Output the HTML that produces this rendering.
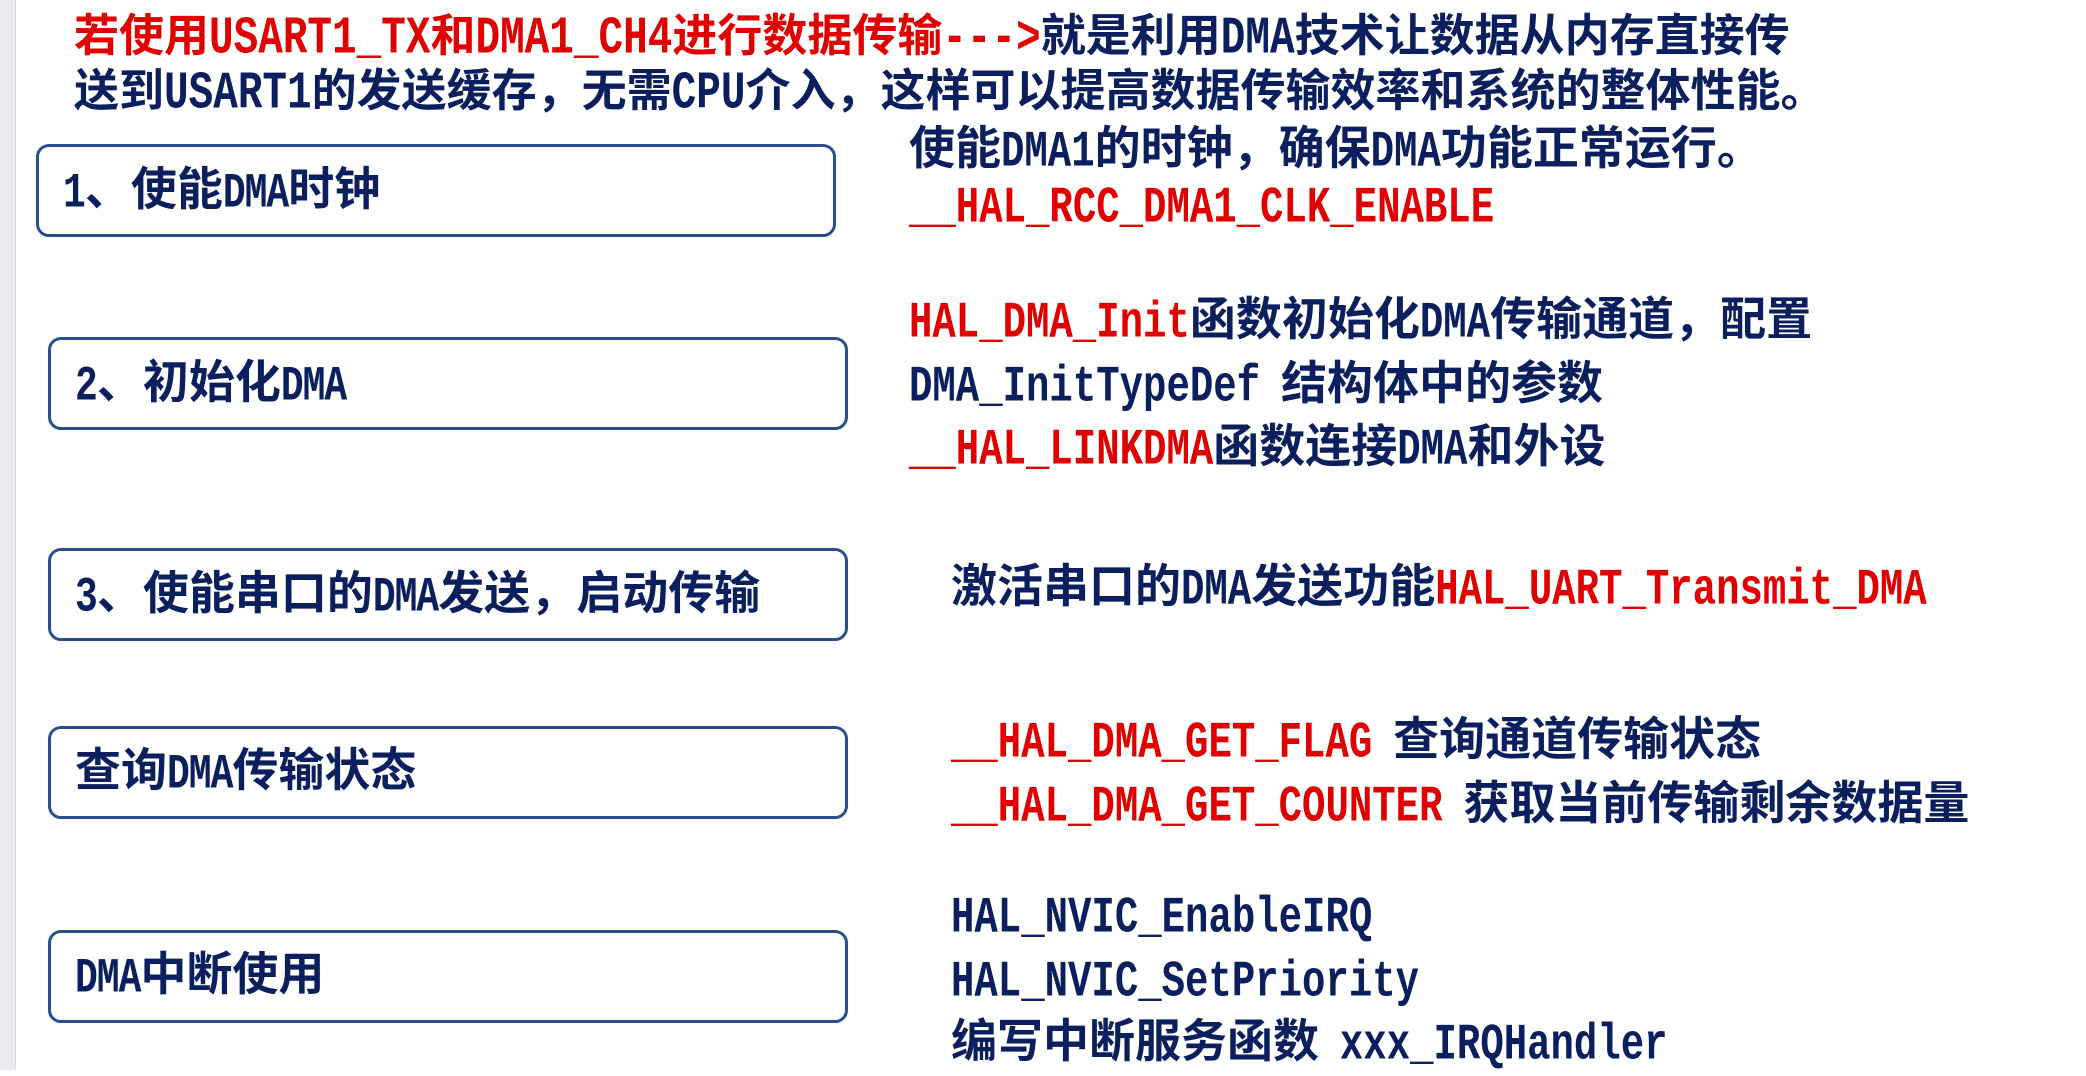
<!DOCTYPE html>
<html><head><meta charset="utf-8"><style>
html,body{margin:0;padding:0;background:#fff;}
body{width:2086px;height:1070px;position:relative;overflow:hidden;font-family:"Liberation Sans","Noto Sans CJK SC",sans-serif;}
.strip{position:absolute;left:0;top:0;width:15px;height:1070px;background:#e9ebee;border-right:1px solid #d6d9de;}
.t{position:absolute;white-space:nowrap;color:#0b1f5e;font-weight:bold;font-family:"Noto Sans CJK SC",sans-serif;}
.r{color:#e00000;}
.l{display:inline-block;font-family:"Liberation Mono",monospace;transform:scaleY(1.3);transform-origin:50% 60%;font-weight:bold;}
.h{font-size:45px;line-height:46px;}
.h .l{font-size:41px;}
.s{font-size:46px;line-height:46px;}
.s .l{font-size:39px;}
.box{position:absolute;border:3px solid #2c4d8c;border-radius:13px;box-sizing:border-box;width:800px;height:93px;}
.bt{font-size:46px;line-height:46px;}
.bt .l{font-size:38px;letter-spacing:-1px;}
</style></head><body>
<div class="strip"></div>
<div class="t h r" style="left:74px;top:9px;">若使用<span class="l">USART1_TX</span>和<span class="l">DMA1_CH4</span>进行数据传输<span class="l">---&gt;</span><span style="color:#0b1f5e">就是利用<span class="l">DMA</span>技术让数据从内存直接传</span></div>
<div class="t h" style="left:74px;top:64px;">送到<span class="l">USART1</span>的发送缓存，无需<span class="l">CPU</span>介入，这样可以提高数据传输效率和系统的整体性能。</div>

<div class="box" style="left:36px;top:144px;"></div>
<div class="t bt" style="left:63px;top:163px;"><span class="l">1</span>、使能<span class="l">DMA</span>时钟</div>
<div class="box" style="left:48px;top:337px;"></div>
<div class="t bt" style="left:75px;top:356px;"><span class="l">2</span>、初始化<span class="l">DMA</span></div>
<div class="box" style="left:48px;top:548px;"></div>
<div class="t bt" style="left:75px;top:567px;"><span class="l">3</span>、使能串口的<span class="l">DMA</span>发送，启动传输</div>
<div class="box" style="left:48px;top:726px;"></div>
<div class="t bt" style="left:75px;top:744px;">查询<span class="l">DMA</span>传输状态</div>
<div class="box" style="left:48px;top:930px;"></div>
<div class="t bt" style="left:75px;top:948px;"><span class="l">DMA</span>中断使用</div>

<div class="t s" style="left:909px;top:122px;">使能<span class="l">DMA1</span>的时钟，确保<span class="l">DMA</span>功能正常运行。</div>
<div class="t s r" style="left:909px;top:178px;"><span class="l">__HAL_RCC_DMA1_CLK_ENABLE</span></div>
<div class="t s" style="left:909px;top:293px;"><span class="l r">HAL_DMA_Init</span>函数初始化<span class="l">DMA</span>传输通道，配置</div>
<div class="t s" style="left:909px;top:357px;"><span class="l">DMA_InitTypeDef</span>&nbsp;&nbsp;结构体中的参数</div>
<div class="t s" style="left:909px;top:420px;"><span class="l r">__HAL_LINKDMA</span>函数连接<span class="l">DMA</span>和外设</div>
<div class="t s" style="left:951px;top:560px;">激活串口的<span class="l">DMA</span>发送功能<span class="l r">HAL_UART_Transmit_DMA</span></div>
<div class="t s" style="left:951px;top:713px;"><span class="l r">__HAL_DMA_GET_FLAG</span>&nbsp;&nbsp;查询通道传输状态</div>
<div class="t s" style="left:951px;top:777px;"><span class="l r">__HAL_DMA_GET_COUNTER</span>&nbsp;&nbsp;获取当前传输剩余数据量</div>
<div class="t s" style="left:951px;top:888px;"><span class="l">HAL_NVIC_EnableIRQ</span></div>
<div class="t s" style="left:951px;top:952px;"><span class="l">HAL_NVIC_SetPriority</span></div>
<div class="t s" style="left:951px;top:1015px;">编写中断服务函数&nbsp;&nbsp;<span class="l">xxx_IRQHandler</span></div>
</body></html>
